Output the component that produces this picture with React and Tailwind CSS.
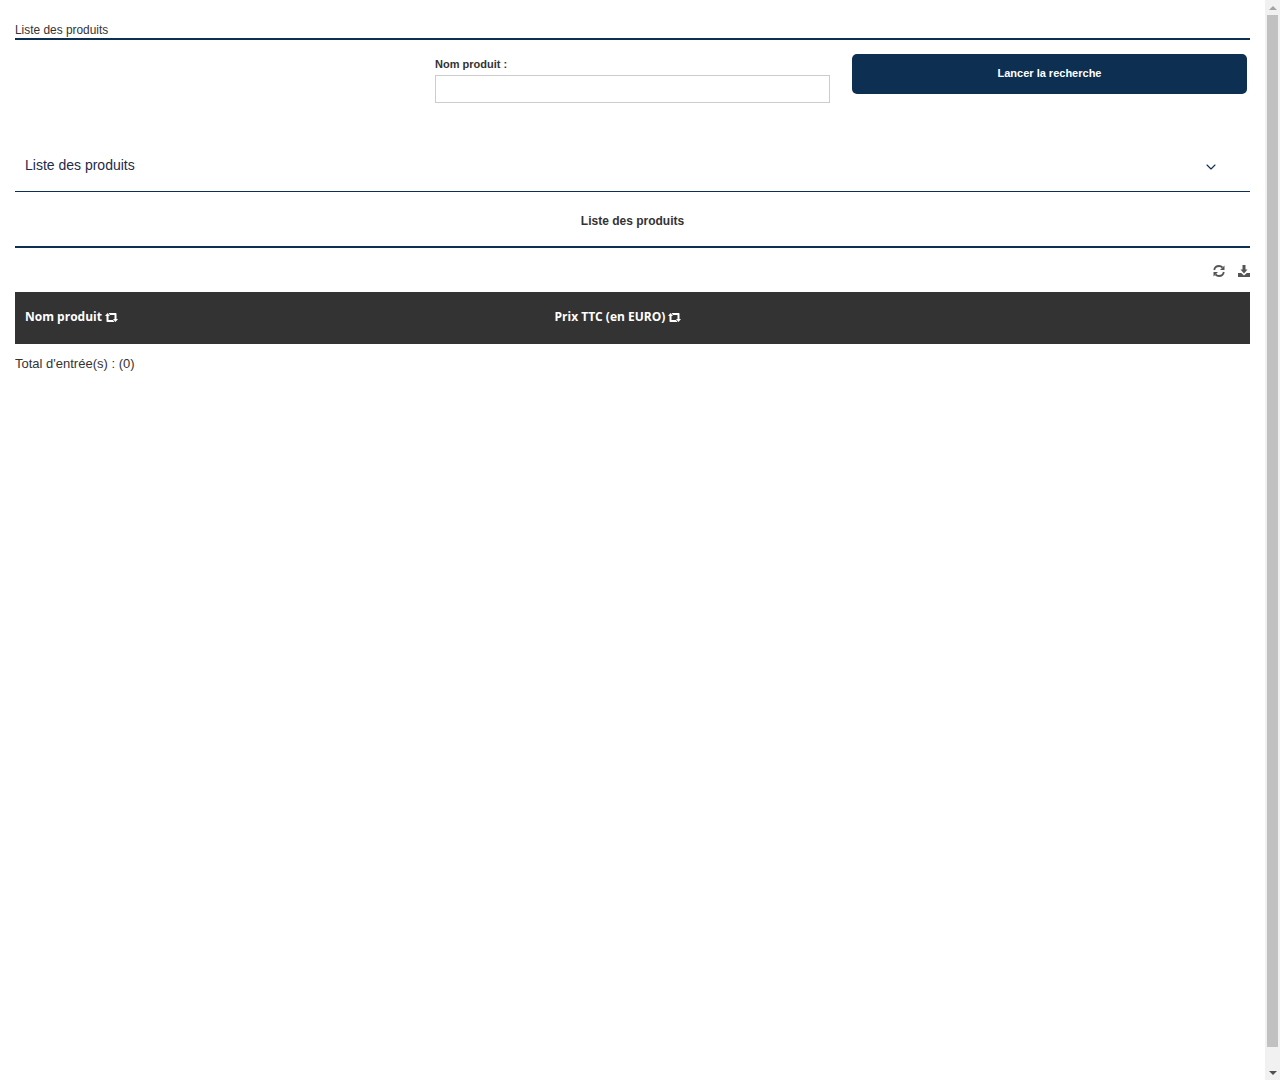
import { ChevronDown } from 'lucide-react'

function RetweetIcon() {
  return (
    <svg viewBox="0 0 13 9" className="h-[9px] w-[13px] fill-white">
      <path d="M0 3 2.5 0 5 3H3.5v4H8l1.5 2H2.2a.7.7 0 0 1-.7-.7V3z" />
      <path d="M13 6 10.5 9 8 6h1.5V2H5L3.5 0h7.3a.7.7 0 0 1 .7.7V6z" />
    </svg>
  )
}

function RefreshIcon() {
  return (
    <svg viewBox="0 0 12 12" className="h-[12px] w-[12px] fill-[#555]">
      <path d="M1.2 5C1.6 2.7 3.6 1 6 1c1.4 0 2.6.6 3.5 1.5" fill="none" stroke="#555" strokeWidth="1.8" />
      <path d="M11.5.5V5H7z" />
      <path d="M10.8 7c-.4 2.3-2.4 4-4.8 4-1.4 0-2.6-.6-3.5-1.5" fill="none" stroke="#555" strokeWidth="1.8" />
      <path d="M.5 11.5V7H5z" />
    </svg>
  )
}

function DownloadIcon() {
  return (
    <svg viewBox="0 0 12 12" className="h-[12px] w-[12px] fill-[#555]">
      <path d="M4.5 0h3v4.5h2L6 8.5l-3.5-4h2z" />
      <path d="M0 8h3.2L6 10.5 8.8 8H12v4H0z" />
    </svg>
  )
}

function SortLabel({ children }) {
  return (
    <span className="flex items-center gap-[3px]">
      {children}
      <RetweetIcon />
    </span>
  )
}

function Scrollbar() {
  return (
    <div className="flex h-[1080px] w-[15px] shrink-0 flex-col items-center bg-[#f1f1f1]">
      <div className="flex h-[15px] w-full items-center justify-center">
        <div className="h-0 w-0 border-x-[4px] border-b-[4px] border-x-transparent border-b-[#a3a3a3]" />
      </div>
      <div className="h-[1032px] w-[11px] bg-[#c1c1c1]" />
      <div className="mt-auto flex h-[15px] w-full items-center justify-center">
        <div className="h-0 w-0 border-x-[4px] border-t-[4px] border-x-transparent border-t-[#505050]" />
      </div>
    </div>
  )
}

export default function App() {
  return (
    <div className="flex h-[1080px] overflow-hidden bg-white font-['Liberation_Sans',Arial,sans-serif] text-[#333]">
      <div className="flex-1 px-[15px] pt-[22px]">
        <h1 className="box-content h-[16px] border-b-2 border-[#0c2f52] text-[11.9px] leading-[16px] font-normal">
          Liste des produits
        </h1>

        <div className="flex h-[100px]">
          <div className="ml-[420px] w-[395px] pt-[18px]">
            <label className="block text-[11px] leading-[13px] font-bold">Nom produit :</label>
            <input
              type="text"
              className="mt-[4px] block h-[28px] w-[395px] border border-[#ccc] bg-white"
            />
          </div>
          <div className="ml-[22px] pt-[14px]">
            <button
              type="button"
              className="h-[40px] w-[395px] rounded-[5px] bg-[#0c2f52] pb-[2px] text-[11px] font-bold text-white"
            >
              Lancer la recherche
            </button>
          </div>
        </div>

        <div className="flex h-[52px] items-center justify-between border-b border-[#0c2f52] pr-[31px] pb-[2px] pl-[10px]">
          <span className="text-sm text-[#1c2b4a]">Liste des produits</span>
          <ChevronDown className="mt-[5px] h-4 w-4 text-[#0c2f52]" strokeWidth={1.6} />
        </div>

        <div className="flex h-[56px] items-center justify-center border-b-2 border-[#0c2f52] pt-[4px] text-xs font-bold">
          Liste des produits
        </div>

        <div className="flex h-[44px] items-center justify-end gap-[13px] pt-[2px]">
          <RefreshIcon />
          <DownloadIcon />
        </div>

        <div className="grid h-[52px] grid-cols-[529.5px_1fr] items-center bg-[#333] pb-[2px] pl-[10px] font-['Open_Sans',sans-serif] text-xs font-bold text-white">
          <SortLabel>Nom produit</SortLabel>
          <SortLabel>Prix TTC (en EURO)</SortLabel>
        </div>

        <p className="mt-[12px] text-[13px] leading-[15px]">Total d'entrée(s) : (0)</p>
      </div>
      <Scrollbar />
    </div>
  )
}
